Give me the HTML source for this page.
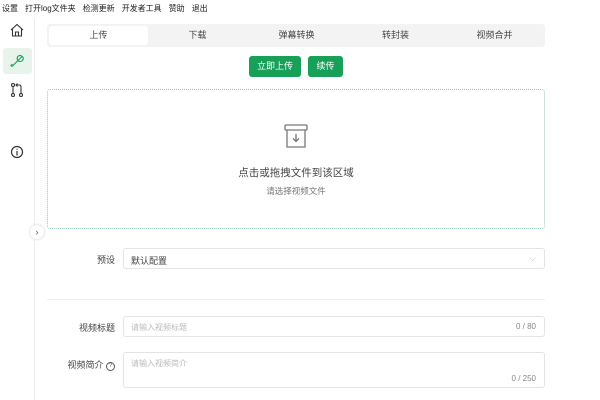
<!DOCTYPE html>
<html><head><meta charset="utf-8"><style>
*{box-sizing:border-box;margin:0;padding:0}
body{width:600px;height:400px;overflow:hidden;background:#fff;font-family:"Liberation Sans","Noto Sans CJK SC",sans-serif;font-size:9px;color:#444;position:relative}
.abs{position:absolute}
.menu{top:3px;left:2px;font-size:8px;color:#222;white-space:nowrap}
.menu span{margin-right:7px}
.side{left:34px;top:18px;width:1px;height:382px;background:#eee}
.act{left:3px;top:48px;width:29px;height:26px;background:#e8f3ec;border-radius:3px}
.tabs{left:47px;top:24px;width:498px;height:23px;background:#f3f3f3;border-radius:3px}
.tab{top:0;height:23px;line-height:23px;text-align:center;font-size:9px;color:#444}
.btn{background:#18a058;color:#fff;font-size:9px;text-align:center;line-height:21px;border-radius:3px;height:21px;top:56px}
.drop{left:47px;top:89px;width:498px;height:140px;border:1px dotted #8fcfae;border-radius:3px}
.lbl{text-align:right;width:70px;left:45px;font-size:9px;color:#444}
.inp{left:123px;width:422px;border:1px solid #e4e4e4;border-radius:3px}
.ph{color:#bbb;font-size:8px}
</style></head><body>
<div class="abs menu"><span>设置</span><span>打开log文件夹</span><span>检测更新</span><span>开发者工具</span><span>赞助</span><span>退出</span></div>
<div class="abs side"></div>
<div class="abs act"></div>
<svg class="abs" style="left:9px;top:22px" width="16" height="16" viewBox="0 0 16 16" fill="none" stroke="#333" stroke-width="1.1"><path d="M2 8L8 2.5 14 8M3.5 6.8V14H12.5V6.8M6.5 14V10H9.5V14"/></svg>
<svg class="abs" style="left:9px;top:53px" width="16" height="16" viewBox="0 0 16 16" fill="none" stroke="#18a058" stroke-width="1.1"><path d="M3 13.5L9 7.5M10.5 2.5a3 3 0 0 0-1.5 5l4-4a3 3 0 0 0-2.5-1zM9 7.5a3 3 0 0 0 4.5-4M3 13.5l-1-1 1.5-1.5"/></svg>
<svg class="abs" style="left:10px;top:82px" width="14" height="16" viewBox="0 0 14 16" fill="none" stroke="#333" stroke-width="1.1"><circle cx="3" cy="13" r="1.5"/><circle cx="11" cy="13" r="1.5"/><circle cx="3" cy="3" r="1.5"/><path d="M3 4.5V11.5M11 11.5V5Q11 3 9 3H6M7.5 1.5L6 3 7.5 4.5"/></svg>
<svg class="abs" style="left:10px;top:145px" width="14" height="14" viewBox="0 0 14 14" fill="none" stroke="#333" stroke-width="1.2"><circle cx="7" cy="7" r="5.5"/><path d="M7 6V10.5M7 3.8V4.8"/></svg>
<div class="abs" style="left:30px;top:225px;width:14px;height:14px;border-radius:50%;background:#fff;box-shadow:0 0 3px rgba(0,0,0,.2);font-size:9px;line-height:14px;text-align:center;color:#555">›</div>
<div class="abs tabs">
<div class="abs" style="left:2px;top:2px;width:99px;height:19px;background:#fff;border-radius:3px"></div>
<div class="abs tab" style="left:2px;width:99px">上传</div>
<div class="abs tab" style="left:101px;width:99px">下载</div>
<div class="abs tab" style="left:200px;width:99px">弹幕转换</div>
<div class="abs tab" style="left:299px;width:99px">转封装</div>
<div class="abs tab" style="left:398px;width:99px">视频合并</div>
</div>
<div class="abs btn" style="left:249px;width:52px">立即上传</div>
<div class="abs btn" style="left:308px;width:35px">续传</div>
<div class="abs drop"></div>
<svg class="abs" style="left:283px;top:123px" width="26" height="26" viewBox="0 0 26 26" fill="none" stroke="#777" stroke-width="1.3"><rect x="2" y="2" width="22" height="5" rx="1"/><path d="M4 7V24H22V7M13 11V18M10 15.5L13 18.5 16 15.5"/></svg>
<div class="abs" style="left:47px;width:498px;top:165px;text-align:center;font-size:10.5px;color:#444">点击或拖拽文件到该区域</div>
<div class="abs" style="left:47px;width:498px;top:185px;text-align:center;font-size:8.5px;color:#777">请选择视频文件</div>
<div class="abs lbl" style="top:253px">预设</div>
<div class="abs inp" style="top:248px;height:21px;padding:5px 7px;font-size:9px;color:#444">默认配置<span style="position:absolute;right:8px;top:4px;color:#bbb">⌵</span></div>
<div class="abs" style="left:47px;top:299px;width:498px;height:1px;background:#eee"></div>
<div class="abs lbl" style="top:321px">视频标题</div>
<div class="abs inp" style="top:316px;height:21px;padding:5px 7px"><span class="ph">请输入视频标题</span><span style="position:absolute;right:8px;top:5px;color:#888;font-size:8px">0 / 80</span></div>
<div class="abs lbl" style="top:358px">视频简介 <span style="display:inline-block;width:9px;height:9px;border:1px solid #555;border-radius:50%;font-size:6px;line-height:7px;text-align:center;vertical-align:1px">?</span></div>
<div class="abs inp" style="top:352px;height:36px;padding:5px 7px"><span class="ph">请输入视频简介</span><span style="position:absolute;right:8px;top:21px;color:#888;font-size:8px">0 / 250</span></div>
</body></html>
